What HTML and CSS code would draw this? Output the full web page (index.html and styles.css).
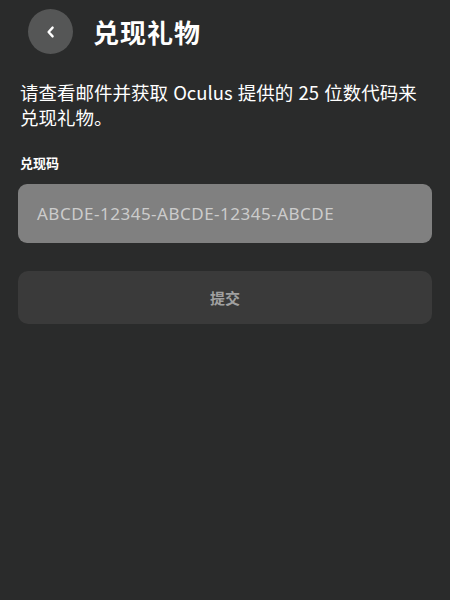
FILE: index.html
```html
<!DOCTYPE html>
<html lang="zh">
<head>
<meta charset="utf-8">
<link rel="stylesheet" href="styles.css">
</head>
<body>
<div class="page">
  <header class="header">
    <button class="back" aria-label="返回">
      <svg width="16" height="16" viewBox="0 0 16 16"><path d="M9.6 3.6 L5.6 8 L9.6 12.4" fill="none" stroke="#fff" stroke-width="2.4" stroke-linecap="round" stroke-linejoin="round"/></svg>
    </button>
    <h1 class="title">兑现礼物</h1>
  </header>
  <p class="desc">请查看邮件并获取 Oculus 提供的 25 位数代码来兑现礼物。</p>
  <label class="label">兑现码</label>
  <div class="input">ABCDE-12345-ABCDE-12345-ABCDE</div>
  <button class="submit">提交</button>
</div>
</body>
</html>
```
FILE: styles.css
```css
html, body {
  margin: 0;
  padding: 0;
  background: #2a2b2b;
  height: 100%;
}
.page {
  font-family: "Noto Sans CJK SC", "Noto Sans", sans-serif;
  color: #fff;
  padding: 0 18px 0 18px;
  display: flex;
  flex-direction: column;
}
.header {
  display: flex;
  align-items: center;
  padding-top: 9px;
  padding-left: 10px;
  gap: 20px;
}
.back {
  width: 45px;
  height: 45px;
  border-radius: 50%;
  background: #555656;
  border: none;
  padding: 0;
  display: flex;
  align-items: center;
  justify-content: center;
}
.title {
  margin: 0;
  font-size: 26px;
  font-weight: 700;
  line-height: 45px;
  letter-spacing: 1px;
}
.desc {
  margin: 26px 0 0 2px;
  padding-right: 12px;
  font-size: 18.5px;
  line-height: 25px;
  font-weight: 400;
  word-spacing: 1px;
}
.label {
  margin: 24px 0 0 2px;
  font-size: 13px;
  font-weight: 700;
  line-height: 18px;
}
.input {
  margin-top: 12px;
  height: 59px;
  border-radius: 9px;
  background: #808080;
  color: #cccccc;
  font-family: "Noto Sans", sans-serif;
  font-size: 17px;
  letter-spacing: 0.5px;
  display: flex;
  align-items: center;
  padding-left: 19px;
}
.submit {
  margin-top: 28px;
  height: 53px;
  border-radius: 10px;
  background: #3a3a3a;
  border: none;
  color: #a0a0a0;
  font-family: "Noto Sans CJK SC", sans-serif;
  font-size: 15px;
  font-weight: 700;
}
```
